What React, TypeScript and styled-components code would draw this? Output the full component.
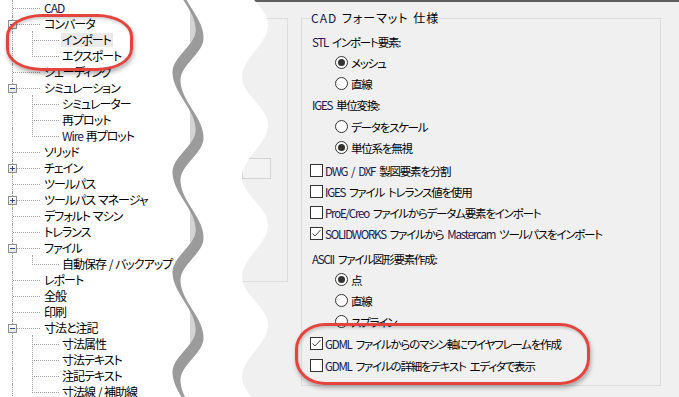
import React from "react";
import styled, { createGlobalStyle, css } from "styled-components";

const FONT = `"Noto Sans CJK JP", "Noto Sans", sans-serif`;

const GlobalStyle = createGlobalStyle`
  html, body { margin: 0; padding: 0; background: #fff; }
  body { font-family: ${FONT}; }
`;

const Stage = styled.div`
  position: relative;
  width: 679px;
  height: 397px;
  overflow: hidden;
  display: flex;
  align-items: flex-start;
  background: #fff;
  font-family: ${FONT};
  font-feature-settings: "palt";
  font-size: 12px;
  color: #000;
`;

/* ---------- tree ---------- */

const TreePane = styled.ul`
  flex: 0 0 196px;
  box-sizing: border-box;
  height: 397px;
  margin: 0;
  padding: 0;
  list-style: none;
  border-right: 6px solid #d3d3d3;
  background: #fff;
  overflow: hidden;
  letter-spacing: -1px;
  word-spacing: 1px;
`;

const DOT = "1px dotted #9c9c9c";

const TreeRow = styled.li<{ $level: 0 | 1; $first?: boolean }>`
  position: relative;
  height: 16px;
  display: flex;
  align-items: center;
  padding-left: ${(p) => (p.$level === 0 ? 43 : 61)}px;
  white-space: nowrap;
  &::before {
    content: "";
    position: absolute;
    left: 12px;
    top: 0;
    bottom: 0;
    border-left: ${DOT};
  }
  &::after {
    content: "";
    position: absolute;
    ${(p) =>
      p.$level === 0
        ? css`
            left: 13px;
            top: 8px;
            width: 27px;
            border-top: ${DOT};
          `
        : css`
            left: 32px;
            top: ${p.$first ? -1 : -8}px;
            height: ${p.$first ? 9 : 16}px;
            width: 26px;
            border-left: ${DOT};
            border-bottom: ${DOT};
          `}
  }
`;

const TreeLabel = styled.span<{ $selected?: boolean }>`
  padding: 0 2px 0 1px;
  line-height: 14px;
  background: ${(p) => (p.$selected ? "#ebebeb" : "transparent")};
`;

const ExpanderBox = styled.span`
  position: absolute;
  left: 8px;
  top: 4px;
  width: 9px;
  height: 9px;
  box-sizing: border-box;
  border: 1px solid #8e8f8f;
  background: linear-gradient(180deg, #ffffff 0%, #e2e2e2 100%);
  z-index: 1;
  display: flex;
`;

const Latin = styled.span`
  color: #17174f;
`;

function Expander({ open }: { open: boolean }) {
  return (
    <ExpanderBox>
      <svg width="7" height="7" viewBox="0 0 7 7">
        <rect x="1" y="3" width="5" height="1" fill="#2a4d8f" />
        {!open && <rect x="3" y="1" width="1" height="5" fill="#2a4d8f" />}
      </svg>
    </ExpanderBox>
  );
}

type TreeItem = {
  label: React.ReactNode;
  level: 0 | 1;
  first?: boolean;
  exp?: "open" | "closed";
  selected?: boolean;
};

const treeItems: TreeItem[] = [
  { label: <Latin>CAD</Latin>, level: 0 },
  { label: "コンバータ", level: 0, exp: "open" },
  { label: "インポート", level: 1, first: true, selected: true },
  { label: "エクスポート", level: 1 },
  { label: "シェーディング", level: 0 },
  { label: "シミュレーション", level: 0, exp: "open" },
  { label: "シミュレーター", level: 1, first: true },
  { label: "再プロット", level: 1 },
  { label: <><Latin>Wire</Latin> 再プロット</>, level: 1 },
  { label: "ソリッド", level: 0 },
  { label: "チェイン", level: 0, exp: "closed" },
  { label: "ツールパス", level: 0 },
  { label: "ツールパス マネージャ", level: 0, exp: "closed" },
  { label: "デフォルト マシン", level: 0 },
  { label: "トレランス", level: 0 },
  { label: "ファイル", level: 0, exp: "open" },
  { label: "自動保存 / バックアップ", level: 1, first: true },
  { label: "レポート", level: 0 },
  { label: "全般", level: 0 },
  { label: "印刷", level: 0 },
  { label: "寸法と注記", level: 0, exp: "open" },
  { label: "寸法属性", level: 1, first: true },
  { label: "寸法テキスト", level: 1 },
  { label: "注記テキスト", level: 1 },
  { label: "寸法線 / 補助線", level: 1 },
];

/* ---------- settings ---------- */

const SettingsPane = styled.section`
  flex: 1;
  align-self: stretch;
  margin-left: 46px;
  background: #f0f0f0;
  border-top: 2px solid #5e5e5e;
  padding-top: 8px;
  display: flex;
  align-items: flex-start;
`;

const SideGroup = styled.div`
  margin-top: 8px;
  width: 46px;
  height: 264px;
  box-sizing: border-box;
  border: 1px solid #dcdcdc;
  border-left: none;
  padding-top: 139px;
  flex: none;
`;

const TextStub = styled.div`
  width: 29px;
  height: 21px;
  box-sizing: border-box;
  border: 1px solid #d2d2d2;
  background: #f3f3f3;
`;

const Group = styled.fieldset`
  margin: 0 0 0 13px;
  width: 360px;
  height: 376px;
  box-sizing: border-box;
  border: 1px solid #dcdcdc;
  padding: 5px 0 0 8px;
  min-width: 0;
  flex: none;
`;

const Legend = styled.legend`
  padding: 0 1px;
  line-height: 16px;
  font-size: 12px;
  letter-spacing: 1px;
  word-spacing: 1px;
`;

const Row = styled.div<{ $indent?: number; $mt?: number }>`
  height: 21px;
  display: flex;
  align-items: center;
  padding-left: ${(p) => p.$indent ?? 0}px;
  margin-top: ${(p) => p.$mt ?? 0}px;
  line-height: 16px;
  font-size: 11.5px;
  letter-spacing: -1.2px;
  word-spacing: 2.5px;
`;

const Caption = styled.span`
  white-space: pre;
`;

const Radio = styled.span<{ $on?: boolean }>`
  flex: none;
  width: 13px;
  height: 13px;
  box-sizing: border-box;
  border-radius: 50%;
  border: 1px solid #333;
  background: #fff;
  margin-right: 3px;
  display: inline-flex;
  align-items: center;
  justify-content: center;
  &::after {
    content: "";
    width: 7px;
    height: 7px;
    border-radius: 50%;
    background: #333;
    display: ${(p) => (p.$on ? "block" : "none")};
  }
`;

const CheckBox = styled.span`
  flex: none;
  width: 13px;
  height: 13px;
  box-sizing: border-box;
  border: 1px solid #333;
  background: #fff;
  margin-right: 2px;
  display: inline-flex;
`;

function Check({ on }: { on?: boolean }) {
  return (
    <CheckBox>
      {on && (
        <svg width="11" height="11" viewBox="0 0 11 11">
          <polyline points="1.5,5.5 4,8 9.5,2" fill="none" stroke="#444" strokeWidth="1" />
        </svg>
      )}
    </CheckBox>
  );
}

/* ---------- overlays ---------- */

const Ring = styled.div`
  position: absolute;
  box-sizing: border-box;
  border: 3px solid #e3443d;
  box-shadow: 1px 3px 4px rgba(0, 0, 0, 0.3), inset 1px 2px 3px rgba(0, 0, 0, 0.18);
  pointer-events: none;
  z-index: 5;
`;

const TreeRing = styled(Ring)`
  left: 6px;
  top: 14px;
  width: 127px;
  height: 57px;
  border-radius: 36px / 22px;
`;

const OptionRing = styled(Ring)`
  left: 295px;
  top: 323px;
  width: 295px;
  height: 62px;
  border-radius: 30px / 26px;
`;

const TearLayer = styled.svg`
  position: absolute;
  left: 0;
  top: 0;
  z-index: 3;
  pointer-events: none;
`;

const skewCos = (y: number, y0: number, period: number, fall: number) => {
  const t = ((((y - y0) % period) + period) % period) / period;
  return t < fall ? Math.cos((Math.PI * t) / fall) : Math.cos(Math.PI + (Math.PI * (t - fall)) / (1 - fall));
};
const W = (y: number) => 184 + 11.5 * skewCos(y, 30, 100, 0.42);
const R = (y: number) => 255 + 13 * skewCos(y, 25, 100, 0.52);

const gapPath = (() => {
  const pts: string[] = [];
  for (let y = -4; y <= 402; y += 2) pts.push(`${W(y).toFixed(2)},${y}`);
  for (let y = 402; y >= -4; y -= 2) pts.push(`${R(y).toFixed(2)},${y}`);
  return "M" + pts.join("L") + "Z";
})();

const shadowPath = (() => {
  const pts: string[] = ["-20,-30"];
  for (let y = -30; y <= 404; y += 2) pts.push(`${(W(y) + 8).toFixed(2)},${y + 8}`);
  pts.push("-20,412");
  return "M" + pts.join("L") + "Z";
})();

function Tear() {
  return (
    <TearLayer width="300" height="397" viewBox="0 0 300 397">
      <defs>
        <clipPath id="gapClip">
          <path d={gapPath} />
        </clipPath>
      </defs>
      <path d={gapPath} fill="#fff" />
      <path d={shadowPath} fill="#9b9b9b" clipPath="url(#gapClip)" />
    </TearLayer>
  );
}

export default function App() {
  return (
    <>
      <GlobalStyle />
      <Stage>
        <TreePane>
          {treeItems.map((it, i) => (
            <TreeRow key={i} $level={it.level} $first={it.first}>
              {it.exp && <Expander open={it.exp === "open"} />}
              <TreeLabel $selected={it.selected}>{it.label}</TreeLabel>
            </TreeRow>
          ))}
        </TreePane>

        <SettingsPane>
          <SideGroup>
            <TextStub />
          </SideGroup>
          <Group>
            <Legend>
              <Latin>CAD</Latin> フォーマット 仕様
            </Legend>
            <Row $indent={2}>
              <Caption>
                <Latin>STL</Latin> インポート要素:
              </Caption>
            </Row>
            <Row $indent={25}>
              <Radio $on />
              <Caption>メッシュ</Caption>
            </Row>
            <Row $indent={25}>
              <Radio />
              <Caption>直線</Caption>
            </Row>
            <Row $indent={2}>
              <Caption>
                <Latin>IGES</Latin> 単位変換:
              </Caption>
            </Row>
            <Row $indent={25} $mt={1}>
              <Radio />
              <Caption>データをスケール</Caption>
            </Row>
            <Row $indent={25}>
              <Radio $on />
              <Caption>単位系を無視</Caption>
            </Row>
            <Row $mt={2}>
              <Check />
              <Caption>
                <Latin>DWG / DXF</Latin> 製図要素を分割
              </Caption>
            </Row>
            <Row>
              <Check />
              <Caption>
                <Latin>IGES</Latin> ファイル トレランス値を使用
              </Caption>
            </Row>
            <Row>
              <Check />
              <Caption>
                <Latin>ProE/Creo</Latin> ファイルからデータム要素をインポート
              </Caption>
            </Row>
            <Row>
              <Check on />
              <Caption>
                <Latin>SOLIDWORKS</Latin> ファイルから <Latin>Mastercam</Latin> ツールパスをインポート
              </Caption>
            </Row>
            <Row $indent={2} $mt={4}>
              <Caption>
                <Latin>ASCII</Latin> ファイル図形要素作成:
              </Caption>
            </Row>
            <Row $indent={25}>
              <Radio $on />
              <Caption>点</Caption>
            </Row>
            <Row $indent={25}>
              <Radio />
              <Caption>直線</Caption>
            </Row>
            <Row $indent={25}>
              <Radio />
              <Caption>スプライン</Caption>
            </Row>
            <Row $mt={1}>
              <Check on />
              <Caption>
                <Latin>GDML</Latin> ファイルからのマシン軸にワイヤフレームを作成
              </Caption>
            </Row>
            <Row $mt={1}>
              <Check />
              <Caption>
                <Latin>GDML</Latin> ファイルの詳細をテキスト エディタで表示
              </Caption>
            </Row>
          </Group>
        </SettingsPane>

        <Tear />
        <TreeRing />
        <OptionRing />
      </Stage>
    </>
  );
}
